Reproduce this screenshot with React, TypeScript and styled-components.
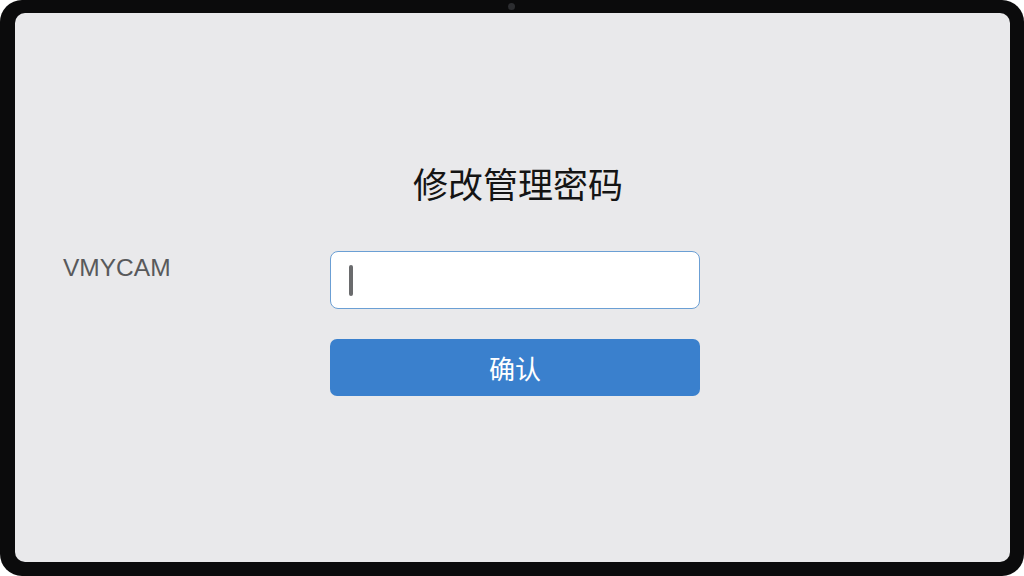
import { createGlobalStyle, styled } from "styled-components"

const GlobalStyle = createGlobalStyle`
  html, body {
    margin: 0;
    padding: 0;
    background: #ffffff;
  }
  body {
    font-family: "Noto Sans CJK SC", "Noto Sans", sans-serif;
  }
`

export default function App() {
  return (
    <>
      <GlobalStyle />
      <Device>
        <Camera />
        <Screen>
          <Layout>
            <Title>修改管理密码</Title>
            <Brand>VMYCAM</Brand>
            <Form>
              <InputBox>
                <Caret />
              </InputBox>
              <ConfirmButton type="button">确认</ConfirmButton>
            </Form>
          </Layout>
        </Screen>
      </Device>
    </>
  )
}

const Device = styled.div`
  position: relative;
  box-sizing: border-box;
  width: 1024px;
  height: 576px;
  padding: 13px 14px 14px 15px;
  background: #0b0b0c;
  border-radius: 22px;
  display: flex;
`

const Camera = styled.div`
  position: absolute;
  top: 3px;
  left: 508px;
  width: 7px;
  height: 7px;
  border-radius: 50%;
  background: #2c2d30;
`

const Screen = styled.div`
  flex: 1;
  background: #e9e9eb;
  border-radius: 10px;
  overflow: hidden;
`

const Layout = styled.div`
  display: grid;
  grid-template-columns: 315px 370px;
  grid-template-areas:
    ". title"
    "brand form";
  padding-top: 150px;
`

const Title = styled.h1`
  grid-area: title;
  margin: 0 0 48px;
  font-size: 35px;
  line-height: 40px;
  font-weight: 400;
  color: #141414;
  text-align: center;
  white-space: nowrap;
  padding-left: 6px;
`

const Brand = styled.div`
  grid-area: brand;
  padding: 3px 0 0 48px;
  font-family: "Liberation Sans", Arial, sans-serif;
  font-size: 24.5px;
  line-height: 28px;
  color: #58595b;
`

const Form = styled.div`
  grid-area: form;
  display: flex;
  flex-direction: column;
  gap: 30px;
`

const InputBox = styled.div`
  box-sizing: border-box;
  height: 58px;
  background: #ffffff;
  border: 1.5px solid #6b9fd4;
  border-radius: 8px;
  display: flex;
  align-items: center;
  padding-left: 18px;
`

const Caret = styled.span`
  display: block;
  width: 4px;
  height: 31px;
  border-radius: 2px;
  background: #6a6b6d;
`

const ConfirmButton = styled.button`
  height: 57px;
  border: none;
  border-radius: 7px;
  background: #3a80cd;
  color: #ffffff;
  font-family: "Noto Sans CJK SC", "Noto Sans", sans-serif;
  font-size: 26px;
  font-weight: 400;
  padding: 0;
  cursor: pointer;
`
